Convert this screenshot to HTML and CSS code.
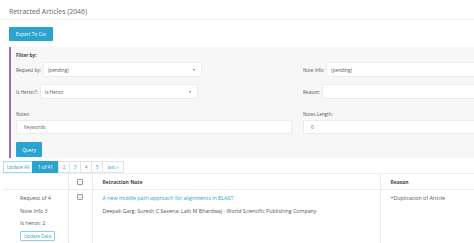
FILE: index.html
```html
<!DOCTYPE html>
<html>
<head>
<meta charset="utf-8">
<link rel="stylesheet" href="styles.css">
</head>
<body>
<div class="page">
  <header class="title-bar">
    <h1 class="title">Retracted Articles (2046)</h1>
  </header>
  <div class="actions">
    <button class="btn btn-primary export">Export To Csv</button>
  </div>
  <section class="filter">
    <div class="filter-title">Filter by:</div>
    <div class="filter-grid">
      <div class="field inline">
        <label class="lbl">Request by:</label>
        <div class="control select sel-req"><span>(pending)</span><i class="caret"></i></div>
      </div>
      <div class="field inline">
        <label class="lbl">Note Info:</label>
        <div class="control grow"><span>(pending)</span></div>
      </div>
      <div class="field inline">
        <label class="lbl">Is Heroic?:</label>
        <div class="control select sel-heroic"><span>Is Heroic</span><i class="caret"></i></div>
      </div>
      <div class="field inline">
        <label class="lbl">Reason:</label>
        <div class="control grow"></div>
      </div>
      <div class="field stacked">
        <label class="lbl">Notes:</label>
        <div class="control full"><span class="ph">Keywords</span></div>
      </div>
      <div class="field stacked">
        <label class="lbl">Notes Length:</label>
        <div class="control full"><span>0</span></div>
      </div>
    </div>
    <button class="btn btn-primary query">Query</button>
  </section>
  <nav class="pager">
    <a class="pg pg-update">Update All</a>
    <a class="pg active">1 of 41</a>
    <a class="pg num">2</a>
    <a class="pg num">3</a>
    <a class="pg num">4</a>
    <a class="pg num">5</a>
    <a class="pg last">last »</a>
  </nav>
  <table class="grid">
    <thead>
      <tr>
        <th class="c1"></th>
        <th class="c2"><span class="cb"></span></th>
        <th class="c3">Retraction Note</th>
        <th class="c4">Reason</th>
      </tr>
    </thead>
    <tbody>
      <tr>
        <td class="c1">
          <div class="meta">Request of 4</div>
          <div class="meta">Note Info 3</div>
          <div class="meta">Is heroic 2</div>
          <button class="btn-outline">Update Data</button>
        </td>
        <td class="c2"><span class="cb"></span></td>
        <td class="c3">
          <div class="meta"><a class="link">A new middle path approach for alignments in BLAST</a></div>
          <div class="meta">Deepak Garg; Suresh C Saxena; Lalit M Bhardwaj - World Scientific Publishing Company</div>
        </td>
        <td class="c4"><div class="meta">+Duplication of Article</div></td>
      </tr>
    </tbody>
  </table>
</div>
</body>
</html>
```

FILE: styles.css
```css
html, body {
  margin: 0;
  padding: 0;
  background: #fff;
  overflow: hidden;
}
body {
  font-family: "Open Sans", "DejaVu Sans", sans-serif;
  color: #555;
  width: 474px;
  height: 243px;
}
.page {
  width: 600px;
}
.title-bar {
  height: 20px;
  border-bottom: 1px solid #f0f0f0;
  box-sizing: border-box;
  padding-left: 9px;
  display: flex;
  align-items: center;
}
.title {
  margin: 0;
  font-size: 6.9px;
  font-weight: 400;
  color: #666;
  line-height: 1;
  position: relative;
  top: 3px;
}
.actions {
  padding: 7px 0 0 9px;
}
.btn {
  border: 0;
  border-radius: 1px;
  font-family: inherit;
  color: #fff;
  padding: 0;
  display: flex;
  align-items: center;
  justify-content: center;
}
.btn-primary {
  background: #2aa4cf;
}
.export {
  width: 44px;
  height: 14px;
  font-size: 4.8px;
}
.filter {
  margin: 6px 0 0 9px;
  border-left: 2px solid #9b6bbd;
  background: #f7f7f7;
  padding: 5px 0 2px 5px;
  height: 111px;
  box-sizing: border-box;
}
.filter-title {
  font-size: 4.7px;
  font-weight: 700;
  color: #444;
  line-height: 6px;
  height: 6px;
}
.filter-grid {
  display: grid;
  grid-template-columns: 276px 276px;
  column-gap: 11px;
  row-gap: 7px;
  margin-top: 4px;
}
.field.inline {
  display: flex;
  align-items: center;
  gap: 2px;
  height: 15px;
}
.field.stacked {
  display: flex;
  flex-direction: column;
  gap: 3px;
  margin-top: 5px;
}
.lbl {
  font-size: 4.6px;
  color: #555;
  line-height: 6px;
  white-space: nowrap;
}
.control {
  background: #fff;
  border: 1px solid #ececec;
  border-radius: 1px;
  box-sizing: border-box;
  height: 15px;
  display: flex;
  align-items: center;
  padding-left: 4px;
  font-size: 4.7px;
  color: #555;
  position: relative;
}
.select {
  width: 159px;
}
.sel-heroic {
  width: 158px;
}
.grow {
  flex: 1;
}
.full {
  width: 100%;
  height: 14px;
  padding-left: 7px;
}
.ph {
  color: #666;
}
.caret {
  position: absolute;
  right: 6px;
  top: 6px;
  width: 0;
  height: 0;
  border-left: 1.5px solid transparent;
  border-right: 1.5px solid transparent;
  border-top: 2px solid #777;
}
.query {
  width: 26px;
  height: 15px;
  font-size: 4.8px;
  margin-top: 8px;
}
.pager {
  display: flex;
  margin: 3px 0 0 3px;
  height: 12px;
}
.pg {
  display: flex;
  align-items: center;
  justify-content: center;
  border: 1px solid #e3e3e3;
  margin-left: -1px;
  background: #fff;
  color: #2aa4cf;
  font-size: 4.7px;
  padding: 0;
  box-sizing: border-box;
}
.pg:first-child {
  margin-left: 0;
}
.pg-update {
  width: 30px;
  border-color: #a9d9ec;
}
.pg.active {
  background: #2aa4cf;
  border-color: #2aa4cf;
  color: #fff;
  width: 27px;
  font-size: 4.8px;
}
.pg.num {
  width: 12px;
}
.pg.last {
  width: 22px;
}
.grid {
  border-collapse: collapse;
  margin-left: 3px;
  width: 590px;
  font-size: 5.3px;
  color: #555;
}
.grid th, .grid td {
  padding: 0;
  vertical-align: top;
  text-align: left;
  box-sizing: border-box;
}
.grid th {
  height: 16px;
  vertical-align: middle;
  font-weight: 700;
  color: #444;
  border-top: 1px solid #f0f0f0;
  border-bottom: 1px solid #ececec;
  border-left: 1px solid #ececec;
  font-size: 5px;
}
.grid td {
  border-left: 1px solid #ececec;
  padding-top: 5px;
  height: 55px;
}
.grid .c1 {
  width: 65px;
  border-left: 0;
  padding-left: 17px;
}
.grid .c2 {
  width: 24px;
  text-align: center;
}
.grid td.c2 {
  padding-top: 4px;
  line-height: 0;
}
.grid .c3 {
  width: 288px;
  padding-left: 10px;
}
.grid .c4 {
  padding-left: 10px;
}
.meta {
  line-height: 6px;
  height: 6px;
  margin-bottom: 6.7px;
  white-space: nowrap;
}
.link {
  color: #2aa4cf;
}
.cb {
  display: inline-block;
  width: 4px;
  height: 4px;
  border: 1px solid #999;
  border-radius: 1px;
  background: #f4f4f4;
  vertical-align: middle;
}
.btn-outline {
  display: flex;
  align-items: center;
  justify-content: center;
  width: 35px;
  height: 10px;
  padding: 0;
  margin-top: -2px;
  background: #fff;
  border: 1px solid #8fcde6;
  border-radius: 1px;
  color: #2aa4cf;
  font-family: inherit;
  font-size: 4.6px;
}
```
